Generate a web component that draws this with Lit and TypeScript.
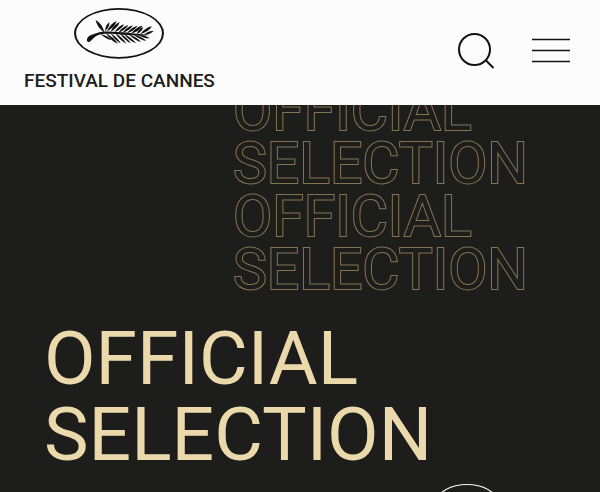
import { LitElement, html, css, svg } from "lit";
import { customElement } from "lit/decorators.js";

// Each leaf of the palm runs from its foot on the stem to its tip: x1, y1, x2, y2, half-width.
const LEAVES: number[][] = [
  [103, 83, 76, 45, 8],
  [104, 79, 117, 52, 6],
  [109, 80, 139, 48, 7],
  [120, 81, 148, 51, 7],
  [132, 82, 161, 58, 6],
  [144, 83, 174, 60, 6],
  [156, 84, 188, 61, 6],
  [169, 85, 202, 62, 6],
  [182, 86, 217, 62, 7],
  [199, 87, 219, 67, 6],
  [209, 88, 245, 64, 7],
  [220, 89, 250, 78, 6],
  [90, 86, 123, 105, 5],
  [106, 84, 143, 117, 6],
  [120, 84, 151, 115, 5],
  [134, 84, 168, 116, 5],
  [148, 85, 181, 115, 5],
  [160, 86, 197, 115, 5],
  [174, 87, 212, 111, 5],
  [188, 88, 228, 108, 5],
  [202, 89, 239, 100, 5],
];

function leaf([x1, y1, x2, y2, w]: number[]): string {
  const len = Math.hypot(x2 - x1, y2 - y1);
  const nx = (-(y2 - y1) / len) * w * 1.2;
  const ny = ((x2 - x1) / len) * w * 1.2;
  const mx = x1 + (x2 - x1) * 0.6;
  const my = y1 + (y2 - y1) * 0.6;
  return `M${x1} ${y1}Q${mx + nx} ${my + ny} ${x2} ${y2}Q${mx - nx} ${my - ny} ${x1} ${y1}Z`;
}

@customElement("palm-emblem")
export class PalmEmblem extends LitElement {
  static styles = css`
    :host {
      display: block;
    }
    .emblem {
      display: block;
      width: 100%;
    }
  `;

  render() {
    return html`
      <svg class="emblem" viewBox="11 9 270 152" fill="currentColor" aria-hidden="true">
        <path
          fill-rule="evenodd"
          d="M11 85A135 76 0 0 1 281 85A135 76 0 0 1 11 85ZM17 85A129 71 0 0 0 275 85A129 71 0 0 0 17 85Z"
        />
        <path
          d="M50 103C52 91 66 89 80 84C96 78 118 79 142 81C176 83 208 87 238 90C206 93 172 91 142 88C114 86 96 85 84 90C72 95 67 102 61 108C55 114 48 110 50 103Z"
        />
        ${LEAVES.map((l) => svg`<path d=${leaf(l)} />`)}
      </svg>
    `;
  }
}

@customElement("app-root")
export class AppRoot extends LitElement {
  static styles = css`
    :host {
      display: flex;
      flex-direction: column;
      min-height: 100vh;
      background: #1d1d1b;
      color: #1d1d1b;
      font-family: Roboto, "Liberation Sans", sans-serif;
    }
    .header {
      display: flex;
      align-items: center;
      justify-content: space-between;
      padding: 8px 30px 13px 24px;
      background: #fcfcfc;
    }
    .brand {
      display: flex;
      flex-direction: column;
      align-items: center;
      gap: 11px;
      color: inherit;
      text-decoration: none;
    }
    .brand-mark {
      width: 90px;
      color: #111;
    }
    .brand-name {
      font-size: 19px;
      font-weight: 500;
      line-height: 22px;
      white-space: nowrap;
    }
    .actions {
      display: flex;
      align-items: center;
      gap: 36px;
    }
    .action {
      display: block;
      padding: 0;
      border: 0;
      background: none;
      color: #111;
      cursor: pointer;
    }
    .icon {
      display: block;
      fill: none;
      stroke: currentColor;
    }
    .hero {
      flex: 1;
      overflow: hidden;
      padding: 0 44px;
    }
    .echo {
      width: max-content;
      margin: -21px 0 24px 189px;
      font-size: 57px;
      line-height: 53px;
      color: #1d1d1b;
      paint-order: stroke fill;
      -webkit-text-stroke: 2px #857452;
    }
    .echo-line {
      display: block;
    }
    .title {
      margin: 0;
      font-size: 75px;
      font-weight: 400;
      line-height: 76px;
      color: #ecd9ab;
    }
    .title-line {
      display: block;
    }
    .selection-mark {
      width: 60px;
      margin: 12px 0 0 393px;
      color: #f4f4f2;
    }
  `;

  render() {
    const echoes = ["OFFICIAL", "SELECTION", "OFFICIAL", "SELECTION"];
    return html`
      <header class="header">
        <a class="brand" href="#">
          <palm-emblem class="brand-mark"></palm-emblem>
          <span class="brand-name">FESTIVAL DE CANNES</span>
        </a>
        <div class="actions">
          <button class="action" type="button" aria-label="Search">
            <svg class="icon" width="38" height="38" viewBox="0 0 38 38" stroke-width="2">
              <circle cx="16.5" cy="18.5" r="15.5" />
              <path d="M28 29.5L35.5 37" />
            </svg>
          </button>
          <button class="action" type="button" aria-label="Menu">
            <svg class="icon" width="38" height="27" viewBox="0 0 38 27" stroke-width="1.5">
              <path d="M0 3.5H38M0 14.5H38M0 25.5H38" />
            </svg>
          </button>
        </div>
      </header>
      <main class="hero">
        <div class="echo" aria-hidden="true">
          ${echoes.map((word) => html`<span class="echo-line">${word}</span>`)}
        </div>
        <h1 class="title">
          <span class="title-line">OFFICIAL</span>
          <span class="title-line">SELECTION</span>
        </h1>
        <palm-emblem class="selection-mark"></palm-emblem>
      </main>
    `;
  }
}
